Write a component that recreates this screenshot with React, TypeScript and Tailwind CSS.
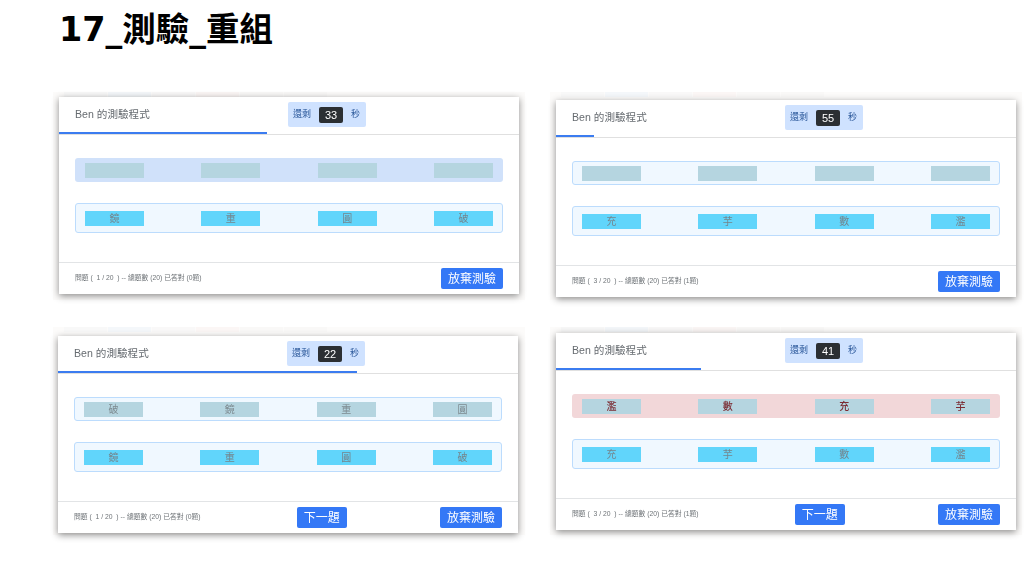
const cjk = '"Liberation Sans", "Noto Sans CJK TC", sans-serif';

type Quiz = {
  seconds: number;
  progress: number;
  question: number;
  correct: number;
  answers: string[];
  answerState: 'filled' | 'plain' | 'wrong';
  choices: string[];
  next: boolean;
  className: string;
};

const quizzes: Quiz[] = [
  {
    seconds: 33,
    progress: 208,
    question: 1,
    correct: 0,
    answers: ['', '', '', ''],
    answerState: 'filled',
    choices: ['鏡', '重', '圓', '破'],
    next: false,
    className: 'ml-[6px]',
  },
  {
    seconds: 55,
    progress: 38,
    question: 3,
    correct: 1,
    answers: ['', '', '', ''],
    answerState: 'plain',
    choices: ['充', '芋', '數', '濫'],
    next: false,
    className: 'mt-[3px] ml-[6px]',
  },
  {
    seconds: 22,
    progress: 299,
    question: 1,
    correct: 0,
    answers: ['破', '鏡', '重', '圓'],
    answerState: 'plain',
    choices: ['鏡', '重', '圓', '破'],
    next: true,
    className: 'mt-[4px] ml-[5px]',
  },
  {
    seconds: 41,
    progress: 145,
    question: 3,
    correct: 1,
    answers: ['濫', '數', '充', '芋'],
    answerState: 'wrong',
    choices: ['充', '芋', '數', '濫'],
    next: true,
    className: 'mt-[1px] ml-[6px]',
  },
];

// faint tabs of the page behind each screenshot
const ghostTabs = ['bg-[#f8f8f8]', 'bg-[#f4f7fa]', 'bg-[#f9f8f8]', 'bg-[#fbf6f5]', 'bg-[#f9f8f7]', 'bg-[#f9f8f7]'];

const Row = ({ cells, tone, state }: { cells: string[]; tone: 'answer' | 'choice'; state: Quiz['answerState'] }) => {
  const rowClass =
    state === 'filled'
      ? 'bg-[#d0e1fa] h-[24px] rounded-[3px] px-[10px]'
      : state === 'wrong'
        ? 'bg-[#f2d7d9] h-[24px] rounded-[3px] px-[10px] font-medium text-[#7b2c33]'
        : tone === 'answer'
          ? 'bg-[#f0f8ff] border border-[#bcdcfd] h-[24px] rounded-[3px] px-[9px] text-[#7d8a90]'
          : 'bg-[#f0f8ff] border border-[#bcdcfd] h-[30px] rounded-[3px] px-[9px] text-[#74848c]';
  return (
    <div className={`flex items-center justify-between ${rowClass}`}>
      {cells.map((cell, i) => (
        <div
          key={i}
          className={`flex h-[15px] w-[59px] items-center justify-center text-[10px] ${tone === 'answer' ? 'bg-[#b5d5e0]' : 'bg-[#61d5fb]'}`}
        >
          {cell}
        </div>
      ))}
    </div>
  );
};

const QuizCard = ({ quiz }: { quiz: Quiz }) => (
  <div className={`flex h-[197px] w-[460px] flex-col bg-white shadow-[0_2px_7px_rgba(0,0,0,0.45)] blur-[0.4px] ${quiz.className}`}>
    <div className="flex h-[35px] items-center px-4">
      <div className="w-[213px] text-[10.6px] text-[#666b70]">Ben 的測驗程式</div>
      <div className="flex h-[25px] w-[78px] items-center justify-between rounded-[2px] bg-[#cfe2ff] px-[5px] text-[9px] text-[#2d5a9c]">
        <span>還剩</span>
        <span className="flex h-[16px] w-[24px] items-center justify-center rounded-[2px] bg-[#2b2f33] pt-[1px] text-[11px] text-white">
          {quiz.seconds}
        </span>
        <span className="pr-[1px]">秒</span>
      </div>
    </div>
    <div className="h-[3px] border-b border-[#e0e0e0]">
      <div className="h-[2px] bg-[#3b7cf0]" style={{ width: quiz.progress }} />
    </div>
    <div className="flex flex-1 flex-col gap-[21px] px-4 pt-[23px]">
      <Row cells={quiz.answers} tone="answer" state={quiz.answerState} />
      <Row cells={quiz.choices} tone="choice" state="plain" />
    </div>
    <div className="flex h-[32px] items-center justify-between border-t border-[#e2e4e6] px-4">
      <span className="text-[6.8px] whitespace-pre text-[#6f7478]">
        問題 (  {quiz.question} / 20  ) -- 總題數 (20) 已答對 ({quiz.correct}題)
      </span>
      {quiz.next && (
        <button className="ml-[3px] flex h-[21px] w-[50px] items-center justify-center rounded-[2px] bg-[#3478f6] text-[12px] text-white">
          下一題
        </button>
      )}
      <button className="flex h-[21px] w-[62px] items-center justify-center rounded-[2px] bg-[#3478f6] text-[12px] text-white">
        放棄測驗
      </button>
    </div>
  </div>
);

export default function App() {
  return (
    <div className="h-[576px] w-[1024px] overflow-hidden bg-white" style={{ fontFamily: cjk }}>
      <h1
        className="pt-[8px] pl-[59px] text-[33.5px] leading-[44px] font-bold text-black"
        style={{ fontFamily: '"DejaVu Sans", "Noto Sans CJK TC", sans-serif' }}
      >
        17_測驗_重組
      </h1>
      <div className="mt-[40px] grid grid-cols-[497px_474px] gap-y-[27px] pl-[53px]">
        {quizzes.map((quiz) => (
          <div key={quiz.seconds} className="h-[208px] w-[472px] bg-[#fcfbfa]">
            <div className="flex h-[5px] gap-[1px] pl-[11px]">
              {ghostTabs.map((tab) => (
                <div key={tab} className={`w-[43px] ${tab}`} />
              ))}
            </div>
            <QuizCard quiz={quiz} />
          </div>
        ))}
      </div>
    </div>
  );
}
